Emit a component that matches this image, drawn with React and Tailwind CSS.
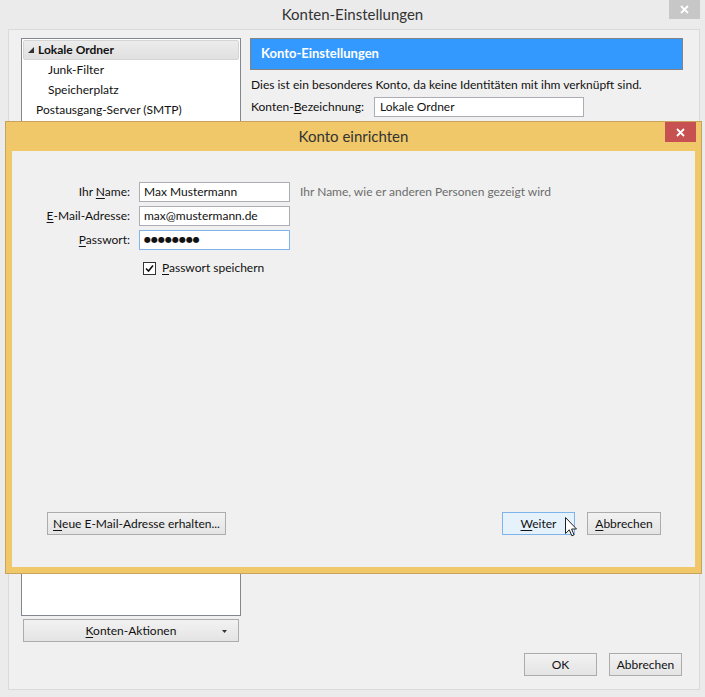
import React from "react";

// access-key letter, underlined like on a Windows dialog
const U = ({ children }) => (
  <span className="underline decoration-1 underline-offset-[2px]">{children}</span>
);

const Button = ({ children, className = "" }) => (
  <div
    className={
      "h-[23px] flex items-center justify-center border border-[#acacac] bg-linear-to-b from-[#f2f2f2] to-[#e4e4e4] " +
      className
    }
  >
    {children}
  </div>
);

const TreeItem = ({ children, indent, selected, bold }) => (
  <div
    className={
      "h-[20px] flex items-center rounded-[2px] border " +
      (selected ? "bg-linear-to-b from-[#ececec] to-[#e0e0e0] border-[#d4d4d4] " : "border-transparent ") +
      (bold ? "font-bold " : "")
    }
    style={{ paddingLeft: indent }}
  >
    {children}
  </div>
);

const Field = ({ value, focused }) => (
  <div
    className={
      "h-[20px] w-[151px] bg-white border flex items-center pl-[4px] " +
      (focused ? "border-[#7eb4ea]" : "border-[#abadb3]")
    }
  >
    {value}
  </div>
);

const App = () => {
  return (
    <div className="relative w-[705px] h-[697px] overflow-hidden bg-[#ebebeb] font-['Lato',sans-serif] text-[12px] text-[#111]">
      {/* outer window title */}
      <div className="h-[29px] flex items-center justify-center text-[15px] text-[#333]">
        Konten-Einstellungen
      </div>
      <div className="absolute top-0 right-[5px] w-[31px] h-[19px] bg-[#c7c7c7] flex items-center justify-center">
        <svg width="9" height="9" viewBox="0 0 9 9">
          <path d="M1 1 L8 8 M8 1 L1 8" stroke="white" strokeWidth="1.8" />
        </svg>
      </div>

      {/* window content */}
      <div className="ml-[8px] mr-[5px] h-[661px] border border-[#dadada] bg-[#f0f0f0] flex flex-col pt-[8px] pl-[12px]">
        <div className="flex gap-[9px]">
          <div className="w-[220px] flex flex-col">
            <div className="h-[578px] border border-[#828790] bg-white p-[1px]">
              <TreeItem indent={4} selected bold>
                <svg width="6" height="6" viewBox="0 0 6 6" className="mr-[4px]">
                  <path d="M6 0 L6 6 L0 6 Z" fill="#333" />
                </svg>
                Lokale Ordner
              </TreeItem>
              <TreeItem indent={24}>Junk-Filter</TreeItem>
              <TreeItem indent={24}>Speicherplatz</TreeItem>
              <TreeItem indent={12}>Postausgang-Server (SMTP)</TreeItem>
            </div>
            <Button className="relative mt-[3px] mx-[2px]">
              <span>
                <U>K</U>onten-Aktionen
              </span>
              <svg width="5" height="3" viewBox="0 0 5 3" className="absolute right-[11px] top-[10px]">
                <path d="M0 0 L5 0 L2.5 3 Z" fill="#333" />
              </svg>
            </Button>
          </div>

          <div className="w-[433px] flex flex-col">
            <div className="h-[32px] border border-[#838383] bg-[#3399ff] flex items-center pl-[10px] text-[13px] font-bold text-white">
              Konto-Einstellungen
            </div>
            <div className="mt-[7px] pl-[1px] leading-[16px]">
              Dies ist ein besonderes Konto, da keine Identitäten mit ihm verknüpft sind.
            </div>
            <div className="mt-[4px] pl-[1px] flex items-center">
              <div className="w-[123px]">
                Konten-<U>B</U>ezeichnung:
              </div>
              <div className="w-[210px] h-[20px] bg-white border border-[#abadb3] flex items-center pl-[5px]">
                Lokale Ordner
              </div>
            </div>
          </div>
        </div>

        <div className="mt-auto flex justify-end gap-[12px] pr-[17px] pb-[13px]">
          <Button className="w-[73px]">OK</Button>
          <Button className="w-[73px]">Abbrechen</Button>
        </div>
      </div>

      {/* modal dialog */}
      <div className="absolute left-[5px] top-[121px] w-[697px] h-[453px] bg-[#f0c869] border border-[#c9a35b] flex flex-col">
        <div className="h-[29px] flex items-center justify-center text-[15px] text-[#333]">
          Konto einrichten
        </div>
        <div className="absolute top-0 right-[5px] w-[31px] h-[20px] bg-[#c75050] flex items-center justify-center">
          <svg width="9" height="9" viewBox="0 0 9 9">
            <path d="M1 1 L8 8 M8 1 L1 8" stroke="white" strokeWidth="1.8" />
          </svg>
        </div>

        <div className="flex-1 mx-[6px] mb-[6px] bg-[#f0f0f0] flex flex-col pt-[31px]">
          <div className="grid grid-cols-[118px_151px_auto] gap-x-[9px] gap-y-[4px] items-center">
            <div className="text-right">
              Ihr <U>N</U>ame:
            </div>
            <Field value="Max Mustermann" />
            <div className="pl-[1px] text-[#6d6d6d]">Ihr Name, wie er anderen Personen gezeigt wird</div>

            <div className="text-right">
              <U>E</U>-Mail-Adresse:
            </div>
            <Field value="max@mustermann.de" />
            <div />

            <div className="text-right">
              <U>P</U>asswort:
            </div>
            <Field
              focused
              value={<span className="font-['DejaVu_Sans',sans-serif] text-[8px]">●●●●●●●●</span>}
            />
            <div />
          </div>

          <div className="mt-[9px] ml-[131px] flex items-center gap-[6px]">
            <div className="w-[13px] h-[13px] bg-white border border-[#333] flex items-center justify-center">
              <svg width="9" height="9" viewBox="0 0 9 9">
                <path d="M1 4.5 L3.5 7 L8 1.5" stroke="#111" strokeWidth="1.6" fill="none" />
              </svg>
            </div>
            <span>
              <U>P</U>asswort speichern
            </span>
          </div>

          <div className="mt-auto flex items-center pl-[35px] pr-[34px] pb-[32px]">
            <Button className="w-[179px]">
              <span>
                <U>N</U>eue E-Mail-Adresse erhalten...
              </span>
            </Button>
            <div className="ml-auto flex gap-[12px]">
              <div className="w-[73px] h-[23px] flex items-center justify-center border border-[#7eb4ea] bg-[#e5f1fb]">
                <span>
                  <U>W</U>eiter
                </span>
              </div>
              <Button className="w-[74px]">
                <span>
                  <U>A</U>bbrechen
                </span>
              </Button>
            </div>
          </div>
        </div>
      </div>

      {/* mouse pointer over "Weiter" */}
      <svg width="13" height="21" viewBox="0 0 13 21" className="absolute left-[565px] top-[517px]">
        <path
          d="M0.5 0.5 L0.5 16.5 L4.3 12.8 L6.8 18.8 L9 17.8 L6.6 12 L11.5 12 Z"
          fill="white"
          stroke="#222"
          strokeWidth="1"
          strokeLinejoin="miter"
        />
      </svg>
    </div>
  );
};

export default App;
